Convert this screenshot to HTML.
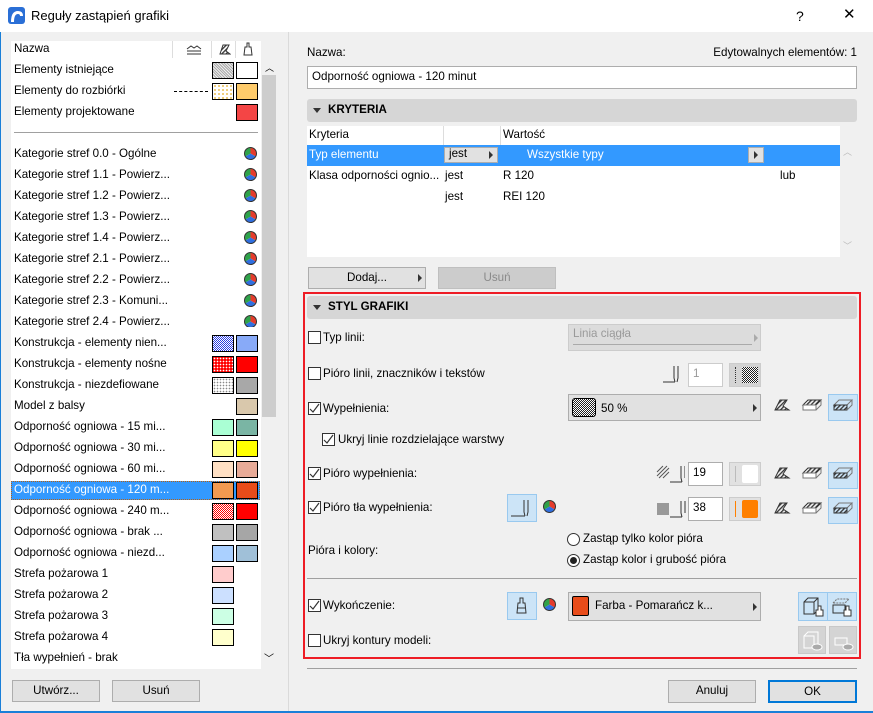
<!DOCTYPE html>
<html><head><meta charset="utf-8">
<style>
*{box-sizing:border-box;margin:0;padding:0}
body{width:873px;height:713px;background:#f0f0f0;font-family:"Liberation Sans",sans-serif;font-size:11.6px;color:#000;position:relative;overflow:hidden}
.a{position:absolute}
.t{position:absolute;line-height:16px;white-space:nowrap}
.sw{position:absolute;width:22px;height:17px;border:1px solid #000}
.btn{position:absolute;background:#e1e1e1;border:1px solid #adadad;text-align:center;line-height:20px}
.cb{position:absolute;width:13px;height:13px;border:1px solid #333;background:#fff}
.bar{position:absolute;background:#d6d6d6;border-radius:3px;font-weight:bold;line-height:22px}
.dd{position:absolute;background:#e1e1e1;border:1px solid #adadad}
.inp{position:absolute;background:#fff;border:1px solid #adadad;line-height:20px;padding-left:4px}
.bb{position:absolute;background:#cce4f7;border:1px solid #99c9ef}
.tri{position:absolute;width:0;height:0;border-top:4px solid transparent;border-bottom:4px solid transparent;border-left:4px solid #333}
</style></head><body>
<svg width="0" height="0" style="position:absolute"><defs>
<pattern id="h" width="3" height="3" patternUnits="userSpaceOnUse" patternTransform="rotate(45)"><rect width="1.3" height="3" fill="#333"/></pattern>
</defs></svg>

<!-- title bar -->
<div class="a" style="left:0;top:0;width:873px;height:32px;background:#fff"></div>
<svg class="a" style="left:8px;top:7px" width="17" height="17"><rect width="17" height="17" rx="3" fill="#2a6fd6"/><path d="M3 15 Q3 4 10 4 Q15 4 15 9 L12 9 Q12 7 10 7 Q6 7 6 15 Z" fill="#fff"/></svg>
<div class="t" style="left:31px;top:8px;font-size:13px">Reguły zastąpień grafiki</div>
<div class="t" style="left:796px;top:8px;font-size:14px">?</div>
<div class="t" style="left:843px;top:7px;font-size:15px">✕</div>
<div class="a" style="left:0;top:32px;width:1px;height:681px;background:#1a7fd8"></div>
<div class="a" style="left:0;top:711px;width:873px;height:2px;background:#1a7fd8"></div>

<!-- left list -->
<div class="a" style="left:11px;top:41px;width:250px;height:628px;background:#fff"></div>
<div class="a" style="left:261px;top:58px;width:16px;height:611px;background:#f0f0f0"></div>
<div class="a" style="left:262px;top:75px;width:14px;height:342px;background:#cdcdcd"></div>
<div class="t" style="left:265px;top:60px;font-size:9px">︿</div>
<div class="t" style="left:264px;top:652px;font-size:10px">﹀</div>
<div class="t" style="left:14px;top:41px">Nazwa</div>
<div class="a" style="left:172px;top:41px;width:1px;height:17px;background:#ddd"></div>
<div class="a" style="left:211px;top:41px;width:1px;height:17px;background:#ddd"></div>
<div class="a" style="left:235px;top:41px;width:1px;height:17px;background:#ddd"></div>
<svg class="a" style="left:186px;top:43px" width="16" height="12"><path d="M1 6 L5 3 L8 5 L11 3 L15 6 M1 8 H15 M1 11 H15" stroke="#333" fill="none"/></svg>
<svg class="a" style="left:219px;top:43px" width="12" height="12"><path d="M1 11 L4 2 L10 2 L7 8 L11 11 Z" stroke="#333" fill="url(#h)"/></svg>
<svg class="a" style="left:243px;top:42px" width="10" height="14"><path d="M4 1 H6 V5 H8 L9 13 H1 L2 5 H4 Z" stroke="#333" fill="none"/></svg>
<div class="a" style="left:14px;top:132px;width:244px;height:1px;background:#a0a0a0"></div>
<div class="a" style="left:11px;top:481px;width:249px;height:19px;background:#3399ff;border:1px dotted #b86010"></div>

<div class="t" style="left:14px;top:62px">Elementy istniejące</div>
<div class="t" style="left:14px;top:83px">Elementy do rozbiórki</div>
<div class="t" style="left:14px;top:104px">Elementy projektowane</div>
<div class="a" style="left:174px;top:91px;width:34px;border-top:1px dashed #000"></div>
<div class="sw" style="left:212px;top:62px;background:repeating-linear-gradient(45deg,#aaa 0 1px,#eee 1px 2px)"></div>
<div class="sw" style="left:236px;top:62px;background:#fff"></div>
<div class="sw" style="left:212px;top:83px;background:radial-gradient(#e0a000 0.6px,#fff 1px) 0 0/4px 4px"></div>
<div class="sw" style="left:236px;top:83px;background:#fecb6b"></div>
<div class="sw" style="left:236px;top:104px;background:#f44545"></div>

<div class="t" style="left:14px;top:146px">Kategorie stref 0.0 - Ogólne</div>
<div class="t" style="left:14px;top:167px">Kategorie stref 1.1 - Powierz...</div>
<div class="t" style="left:14px;top:188px">Kategorie stref 1.2 - Powierz...</div>
<div class="t" style="left:14px;top:209px">Kategorie stref 1.3 - Powierz...</div>
<div class="t" style="left:14px;top:230px">Kategorie stref 1.4 - Powierz...</div>
<div class="t" style="left:14px;top:251px">Kategorie stref 2.1 - Powierz...</div>
<div class="t" style="left:14px;top:272px">Kategorie stref 2.2 - Powierz...</div>
<div class="t" style="left:14px;top:293px">Kategorie stref 2.3 - Komuni...</div>
<div class="t" style="left:14px;top:314px">Kategorie stref 2.4 - Powierz...</div>
<svg class="a" style="left:244px;top:147px" width="13" height="180">
<g><path d="M6.5 6.5 L6.5 0.5 A6 6 0 0 1 11.7 9.5 Z" fill="#e53b2c"/><path d="M6.5 6.5 L11.7 9.5 A6 6 0 0 1 1.3 9.5 Z" fill="#2f6fe0"/><path d="M6.5 6.5 L1.3 9.5 A6 6 0 0 1 6.5 0.5 Z" fill="#2fa24a"/><circle cx="6.5" cy="6.5" r="6" fill="none" stroke="#333"/></g>
<g transform="translate(0,21)"><path d="M6.5 6.5 L6.5 0.5 A6 6 0 0 1 11.7 9.5 Z" fill="#e53b2c"/><path d="M6.5 6.5 L11.7 9.5 A6 6 0 0 1 1.3 9.5 Z" fill="#2f6fe0"/><path d="M6.5 6.5 L1.3 9.5 A6 6 0 0 1 6.5 0.5 Z" fill="#2fa24a"/><circle cx="6.5" cy="6.5" r="6" fill="none" stroke="#333"/></g>
<g transform="translate(0,42)"><path d="M6.5 6.5 L6.5 0.5 A6 6 0 0 1 11.7 9.5 Z" fill="#e53b2c"/><path d="M6.5 6.5 L11.7 9.5 A6 6 0 0 1 1.3 9.5 Z" fill="#2f6fe0"/><path d="M6.5 6.5 L1.3 9.5 A6 6 0 0 1 6.5 0.5 Z" fill="#2fa24a"/><circle cx="6.5" cy="6.5" r="6" fill="none" stroke="#333"/></g>
<g transform="translate(0,63)"><path d="M6.5 6.5 L6.5 0.5 A6 6 0 0 1 11.7 9.5 Z" fill="#e53b2c"/><path d="M6.5 6.5 L11.7 9.5 A6 6 0 0 1 1.3 9.5 Z" fill="#2f6fe0"/><path d="M6.5 6.5 L1.3 9.5 A6 6 0 0 1 6.5 0.5 Z" fill="#2fa24a"/><circle cx="6.5" cy="6.5" r="6" fill="none" stroke="#333"/></g>
<g transform="translate(0,84)"><path d="M6.5 6.5 L6.5 0.5 A6 6 0 0 1 11.7 9.5 Z" fill="#e53b2c"/><path d="M6.5 6.5 L11.7 9.5 A6 6 0 0 1 1.3 9.5 Z" fill="#2f6fe0"/><path d="M6.5 6.5 L1.3 9.5 A6 6 0 0 1 6.5 0.5 Z" fill="#2fa24a"/><circle cx="6.5" cy="6.5" r="6" fill="none" stroke="#333"/></g>
<g transform="translate(0,105)"><path d="M6.5 6.5 L6.5 0.5 A6 6 0 0 1 11.7 9.5 Z" fill="#e53b2c"/><path d="M6.5 6.5 L11.7 9.5 A6 6 0 0 1 1.3 9.5 Z" fill="#2f6fe0"/><path d="M6.5 6.5 L1.3 9.5 A6 6 0 0 1 6.5 0.5 Z" fill="#2fa24a"/><circle cx="6.5" cy="6.5" r="6" fill="none" stroke="#333"/></g>
<g transform="translate(0,126)"><path d="M6.5 6.5 L6.5 0.5 A6 6 0 0 1 11.7 9.5 Z" fill="#e53b2c"/><path d="M6.5 6.5 L11.7 9.5 A6 6 0 0 1 1.3 9.5 Z" fill="#2f6fe0"/><path d="M6.5 6.5 L1.3 9.5 A6 6 0 0 1 6.5 0.5 Z" fill="#2fa24a"/><circle cx="6.5" cy="6.5" r="6" fill="none" stroke="#333"/></g>
<g transform="translate(0,147)"><path d="M6.5 6.5 L6.5 0.5 A6 6 0 0 1 11.7 9.5 Z" fill="#e53b2c"/><path d="M6.5 6.5 L11.7 9.5 A6 6 0 0 1 1.3 9.5 Z" fill="#2f6fe0"/><path d="M6.5 6.5 L1.3 9.5 A6 6 0 0 1 6.5 0.5 Z" fill="#2fa24a"/><circle cx="6.5" cy="6.5" r="6" fill="none" stroke="#333"/></g>
<g transform="translate(0,168)"><path d="M6.5 6.5 L6.5 0.5 A6 6 0 0 1 11.7 9.5 Z" fill="#e53b2c"/><path d="M6.5 6.5 L11.7 9.5 A6 6 0 0 1 1.3 9.5 Z" fill="#2f6fe0"/><path d="M6.5 6.5 L1.3 9.5 A6 6 0 0 1 6.5 0.5 Z" fill="#2fa24a"/><circle cx="6.5" cy="6.5" r="6" fill="none" stroke="#333"/></g>
</svg>

<div class="t" style="left:14px;top:335px">Konstrukcja - elementy nien...</div>
<div class="t" style="left:14px;top:356px">Konstrukcja - elementy nośne</div>
<div class="t" style="left:14px;top:377px">Konstrukcja - niezdefiowane</div>
<div class="t" style="left:14px;top:398px">Model z balsy</div>
<div class="t" style="left:14px;top:419px">Odporność ogniowa -  15 mi...</div>
<div class="t" style="left:14px;top:440px">Odporność ogniowa -  30 mi...</div>
<div class="t" style="left:14px;top:461px">Odporność ogniowa -  60 mi...</div>
<div class="t" style="left:14px;top:482px;color:#fff">Odporność ogniowa - 120 m...</div>
<div class="t" style="left:14px;top:503px">Odporność ogniowa - 240 m...</div>
<div class="t" style="left:14px;top:524px">Odporność ogniowa - brak ...</div>
<div class="t" style="left:14px;top:545px">Odporność ogniowa - niezd...</div>
<div class="t" style="left:14px;top:566px">Strefa pożarowa 1</div>
<div class="t" style="left:14px;top:587px">Strefa pożarowa 2</div>
<div class="t" style="left:14px;top:608px">Strefa pożarowa 3</div>
<div class="t" style="left:14px;top:629px">Strefa pożarowa 4</div>
<div class="t" style="left:14px;top:650px">Tła wypełnień - brak</div>

<div class="sw" style="left:212px;top:335px;background:repeating-conic-gradient(#2a3ee0 0 25%,#fff 0 50%) 0 0/2px 2px"></div>
<div class="sw" style="left:236px;top:335px;background:#88aaf8"></div>
<div class="sw" style="left:212px;top:356px;background:radial-gradient(#fff 0.6px,#f00 1px) 0 0/3px 3px"></div>
<div class="sw" style="left:236px;top:356px;background:#f00"></div>
<div class="sw" style="left:212px;top:377px;background:radial-gradient(#888 0.6px,#fff 1px) 0 0/3px 3px"></div>
<div class="sw" style="left:236px;top:377px;background:#a8a8a8"></div>
<div class="sw" style="left:236px;top:398px;background:#d9c8ac"></div>
<div class="sw" style="left:212px;top:419px;background:#aaffd4"></div>
<div class="sw" style="left:236px;top:419px;background:#7ab5a4"></div>
<div class="sw" style="left:212px;top:440px;background:#ffff88"></div>
<div class="sw" style="left:236px;top:440px;background:#ffff00"></div>
<div class="sw" style="left:212px;top:461px;background:#ffe0c4"></div>
<div class="sw" style="left:236px;top:461px;background:#e8ab98"></div>
<div class="sw" style="left:212px;top:482px;background:#f29a50"></div>
<div class="sw" style="left:236px;top:482px;background:#e84c1a"></div>
<div class="sw" style="left:212px;top:503px;background:repeating-conic-gradient(#f00 0 25%,#fff 0 50%) 0 0/2px 2px"></div>
<div class="sw" style="left:236px;top:503px;background:#f00"></div>
<div class="sw" style="left:212px;top:524px;background:#c0c0c0"></div>
<div class="sw" style="left:236px;top:524px;background:#a6a6a6"></div>
<div class="sw" style="left:212px;top:545px;background:#aad0ff"></div>
<div class="sw" style="left:236px;top:545px;background:#a0c0d8"></div>
<div class="sw" style="left:212px;top:566px;background:#ffcccc"></div>
<div class="sw" style="left:212px;top:587px;background:#cce0ff"></div>
<div class="sw" style="left:212px;top:608px;background:#ccffe4"></div>
<div class="sw" style="left:212px;top:629px;background:#ffffcc"></div>

<div class="btn" style="left:12px;top:680px;width:88px;height:22px">Utwórz...</div>
<div class="btn" style="left:112px;top:680px;width:88px;height:22px">Usuń</div>

<div class="a" style="left:288px;top:32px;width:1px;height:679px;background:#dadada"></div>

<!-- right -->
<div class="t" style="left:307px;top:45px">Nazwa:</div>
<div class="t" style="right:16px;top:45px">Edytowalnych elementów: 1</div>
<div class="inp" style="left:307px;top:66px;width:550px;height:23px">Odporność ogniowa - 120 minut</div>

<div class="bar" style="left:307px;top:99px;width:550px;height:23px;padding-left:21px">KRYTERIA</div>
<div class="a" style="left:313px;top:108px;border-left:4px solid transparent;border-right:4px solid transparent;border-top:5px solid #333"></div>

<div class="a" style="left:307px;top:126px;width:533px;height:131px;background:#fff"></div>
<div class="a" style="left:443px;top:126px;width:1px;height:19px;background:#ddd"></div>
<div class="a" style="left:500px;top:126px;width:1px;height:19px;background:#ddd"></div>
<div class="t" style="left:309px;top:127px">Kryteria</div>
<div class="t" style="left:503px;top:127px">Wartość</div>
<div class="a" style="left:307px;top:145px;width:533px;height:21px;background:#3399ff"></div>
<div class="t" style="left:309px;top:147px;color:#fff">Typ elementu</div>
<div class="a" style="left:444px;top:147px;width:54px;height:16px;background:#e1e1e1;border:1px solid #adadad"></div>
<div class="t" style="left:449px;top:146px">jest</div>
<div class="tri" style="left:489px;top:151px"></div>
<div class="t" style="left:527px;top:147px;color:#fff">Wszystkie typy</div>
<div class="a" style="left:748px;top:147px;width:16px;height:16px;background:#e1e1e1;border:1px solid #adadad"></div>
<div class="tri" style="left:754px;top:151px"></div>
<div class="t" style="left:309px;top:168px">Klasa odporności ognio...</div>
<div class="t" style="left:445px;top:168px">jest</div>
<div class="t" style="left:503px;top:168px">R 120</div>
<div class="t" style="left:780px;top:168px">lub</div>
<div class="t" style="left:445px;top:189px">jest</div>
<div class="t" style="left:503px;top:189px">REI 120</div>
<div class="t" style="left:843px;top:144px;color:#bbb;font-size:9px">︿</div>
<div class="t" style="left:843px;top:238px;color:#bbb;font-size:9px">﹀</div>

<div class="btn" style="left:308px;top:267px;width:118px;height:22px">Dodaj...</div>
<div class="tri" style="left:418px;top:274px"></div>
<div class="btn" style="left:438px;top:267px;width:118px;height:22px;background:#cccccc;border-color:#bfbfbf;color:#8a8a8a">Usuń</div>

<!-- red box -->
<div class="a" style="left:303px;top:292px;width:558px;height:367px;border:2px solid #ee1c25"></div>
<div class="bar" style="left:307px;top:296px;width:550px;height:23px;padding-left:21px">STYL GRAFIKI</div>
<div class="a" style="left:313px;top:305px;border-left:4px solid transparent;border-right:4px solid transparent;border-top:5px solid #333"></div>

<div class="cb" style="left:308px;top:331px"></div>
<div class="t" style="left:323px;top:330px">Typ linii:</div>
<div class="dd" style="left:568px;top:324px;width:193px;height:27px;background:#dcdcdc;border-color:#ccc"></div>
<div class="t" style="left:573px;top:326px;color:#999">Linia ciągła</div>
<div class="a" style="left:573px;top:344px;width:179px;height:1px;background:#aaa"></div>
<div class="tri" style="left:754px;top:334px;border-left-color:#aaa"></div>

<div class="cb" style="left:308px;top:367px"></div>
<div class="t" style="left:323px;top:366px">Pióro linii, znaczników i tekstów</div>
<svg class="a" style="left:662px;top:364px" width="22" height="20"><path d="M1 18 H13 M13 18 L12 14 V2 M16 2 V14 L15 18" stroke="#333" fill="none"/></svg>
<div class="inp" style="left:688px;top:363px;width:35px;height:24px;color:#999;border-color:#ccc">1</div>
<div class="a" style="left:729px;top:363px;width:32px;height:24px;background:#d4d4d4;border:1px solid #ccc"></div>
<div class="a" style="left:742px;top:367px;width:16px;height:16px;background:repeating-conic-gradient(#222 0 25%,#fff 0 50%) 0 0/2px 2px"></div>
<div class="a" style="left:735px;top:367px;width:1px;height:16px;border-left:1px dotted #333"></div>

<div class="cb" style="left:308px;top:402px"><svg width="11" height="11" style="position:absolute;left:0;top:0"><path d="M1 6 L4 9 L10 1" stroke="#333" fill="none" stroke-width="1.2"/></svg></div>
<div class="t" style="left:323px;top:401px">Wypełnienia:</div>
<div class="dd" style="left:568px;top:394px;width:193px;height:27px"></div>
<div class="a" style="left:572px;top:398px;width:24px;height:19px;border:1px solid #000;border-radius:3px;background:repeating-conic-gradient(#222 0 25%,#fff 0 50%) 0 0/2px 2px"></div>
<div class="t" style="left:601px;top:401px">50 %</div>
<div class="tri" style="left:753px;top:404px"></div>

<div class="cb" style="left:322px;top:433px"><svg width="11" height="11" style="position:absolute;left:0;top:0"><path d="M1 6 L4 9 L10 1" stroke="#333" fill="none" stroke-width="1.2"/></svg></div>
<div class="t" style="left:338px;top:432px">Ukryj linie rozdzielające warstwy</div>

<div class="cb" style="left:308px;top:467px"><svg width="11" height="11" style="position:absolute;left:0;top:0"><path d="M1 6 L4 9 L10 1" stroke="#333" fill="none" stroke-width="1.2"/></svg></div>
<div class="t" style="left:323px;top:466px">Pióro wypełnienia:</div>
<svg class="a" style="left:655px;top:462px" width="30" height="22"><path d="M2 10 L8 4 M2 14 L12 4 M4 16 L14 6 M8 16 L14 10" stroke="#555"/><path d="M15 20 H27 M27 20 L26 16 V4 M30 4 V16" stroke="#333" fill="none"/></svg>
<div class="inp" style="left:688px;top:462px;width:35px;height:24px">19</div>
<div class="a" style="left:729px;top:462px;width:32px;height:24px;background:#e1e1e1;border:1px solid #ccc"></div>
<div class="a" style="left:742px;top:465px;width:16px;height:18px;background:#fff;border-radius:2px"></div>
<div class="a" style="left:735px;top:466px;width:1px;height:16px;background:#bbb"></div>

<div class="cb" style="left:308px;top:501px"><svg width="11" height="11" style="position:absolute;left:0;top:0"><path d="M1 6 L4 9 L10 1" stroke="#333" fill="none" stroke-width="1.2"/></svg></div>
<div class="t" style="left:323px;top:500px">Pióro tła wypełnienia:</div>
<div class="bb" style="left:507px;top:494px;width:30px;height:28px"></div>
<svg class="a" style="left:510px;top:498px" width="24" height="20"><path d="M1 18 H15 M15 18 L14 14 V2 M18 2 V14 L17 18" stroke="#333" fill="none"/></svg>
<svg class="a" style="left:543px;top:500px" width="13" height="13"><path d="M6.5 6.5 L6.5 0.5 A6 6 0 0 1 11.7 9.5 Z" fill="#e53b2c"/><path d="M6.5 6.5 L11.7 9.5 A6 6 0 0 1 1.3 9.5 Z" fill="#2f6fe0"/><path d="M6.5 6.5 L1.3 9.5 A6 6 0 0 1 6.5 0.5 Z" fill="#2fa24a"/><circle cx="6.5" cy="6.5" r="6" fill="none" stroke="#333"/></svg>
<div class="a" style="left:657px;top:503px;width:12px;height:12px;background:#999"></div>
<svg class="a" style="left:670px;top:497px" width="16" height="22"><path d="M0 20 H12 M12 20 L11 16 V4 M15 4 V16" stroke="#333" fill="none"/></svg>
<div class="inp" style="left:688px;top:497px;width:35px;height:24px">38</div>
<div class="a" style="left:729px;top:497px;width:32px;height:24px;background:#e1e1e1;border:1px solid #ccc"></div>
<div class="a" style="left:742px;top:500px;width:16px;height:18px;background:#ff8000;border-radius:2px"></div>
<div class="a" style="left:735px;top:501px;width:1px;height:16px;background:#ff8000"></div>

<svg class="a" style="left:770px;top:394px" width="88" height="130">
<g>
<path d="M5 16 L10 6 L17 6 L13 12 L19 16 Z" fill="url(#h)" stroke="#333"/>
<path d="M33 11 L38 6 L51 6 L46 11 Z" fill="url(#h)" stroke="#333"/><path d="M33 11 H46 V16 H33 Z" fill="#fff" stroke="#777"/><path d="M46 16 L51 11 V6" fill="none" stroke="#777"/>
<rect x="58.5" y="0.5" width="29" height="26" fill="#cce4f7" stroke="#99c9ef"/>
<path d="M64 11 L69 6 L82 6 L77 11 Z" fill="none" stroke="#777"/><path d="M64 11 H77 V16 H64 Z" fill="url(#h)" stroke="#333"/><path d="M77 16 L82 11 V6" fill="none" stroke="#777"/>
</g>
<g transform="translate(0,68)">
<path d="M5 16 L10 6 L17 6 L13 12 L19 16 Z" fill="url(#h)" stroke="#333"/>
<path d="M33 11 L38 6 L51 6 L46 11 Z" fill="url(#h)" stroke="#333"/><path d="M33 11 H46 V16 H33 Z" fill="#fff" stroke="#777"/><path d="M46 16 L51 11 V6" fill="none" stroke="#777"/>
<rect x="58.5" y="0.5" width="29" height="26" fill="#cce4f7" stroke="#99c9ef"/>
<path d="M64 11 L69 6 L82 6 L77 11 Z" fill="none" stroke="#777"/><path d="M64 11 H77 V16 H64 Z" fill="url(#h)" stroke="#333"/><path d="M77 16 L82 11 V6" fill="none" stroke="#777"/>
</g>
<g transform="translate(0,103)">
<path d="M5 16 L10 6 L17 6 L13 12 L19 16 Z" fill="url(#h)" stroke="#333"/>
<path d="M33 11 L38 6 L51 6 L46 11 Z" fill="url(#h)" stroke="#333"/><path d="M33 11 H46 V16 H33 Z" fill="#fff" stroke="#777"/><path d="M46 16 L51 11 V6" fill="none" stroke="#777"/>
<rect x="58.5" y="0.5" width="29" height="26" fill="#cce4f7" stroke="#99c9ef"/>
<path d="M64 11 L69 6 L82 6 L77 11 Z" fill="none" stroke="#777"/><path d="M64 11 H77 V16 H64 Z" fill="url(#h)" stroke="#333"/><path d="M77 16 L82 11 V6" fill="none" stroke="#777"/>
</g>
</svg>

<div class="t" style="left:308px;top:543px">Pióra i kolory:</div>
<div class="a" style="left:567px;top:533px;width:13px;height:13px;border:1px solid #333;border-radius:50%;background:#fff"></div>
<div class="t" style="left:583px;top:531px">Zastąp tylko kolor pióra</div>
<div class="a" style="left:567px;top:554px;width:13px;height:13px;border:1px solid #333;border-radius:50%;background:#fff"></div>
<div class="a" style="left:570px;top:557px;width:7px;height:7px;border-radius:50%;background:#222"></div>
<div class="t" style="left:583px;top:552px">Zastąp kolor i grubość pióra</div>

<div class="a" style="left:307px;top:578px;width:550px;height:1px;background:#a0a0a0"></div>

<div class="cb" style="left:308px;top:599px"><svg width="11" height="11" style="position:absolute;left:0;top:0"><path d="M1 6 L4 9 L10 1" stroke="#333" fill="none" stroke-width="1.2"/></svg></div>
<div class="t" style="left:323px;top:598px">Wykończenie:</div>
<div class="bb" style="left:507px;top:592px;width:30px;height:28px"></div>
<svg class="a" style="left:515px;top:596px" width="14" height="20"><path d="M5 2 H8 V7 H10 L11 17 H2 L3 7 H5 Z" stroke="#333" fill="none"/><path d="M3 12 H10" stroke="#333"/></svg>
<svg class="a" style="left:543px;top:598px" width="13" height="13"><path d="M6.5 6.5 L6.5 0.5 A6 6 0 0 1 11.7 9.5 Z" fill="#e53b2c"/><path d="M6.5 6.5 L11.7 9.5 A6 6 0 0 1 1.3 9.5 Z" fill="#2f6fe0"/><path d="M6.5 6.5 L1.3 9.5 A6 6 0 0 1 6.5 0.5 Z" fill="#2fa24a"/><circle cx="6.5" cy="6.5" r="6" fill="none" stroke="#333"/></svg>
<div class="dd" style="left:568px;top:592px;width:193px;height:29px"></div>
<div class="a" style="left:572px;top:596px;width:17px;height:20px;background:#e84c1a;border:1px solid #000;border-radius:2px"></div>
<div class="t" style="left:595px;top:598px">Farba - Pomarańcz k...</div>
<div class="tri" style="left:753px;top:603px"></div>
<div class="bb" style="left:798px;top:592px;width:30px;height:29px"></div>
<div class="bb" style="left:827px;top:592px;width:30px;height:29px"></div>
<svg class="a" style="left:801px;top:595px" width="54" height="24"><path d="M3 7 L7 3 H17 V15 L13 19 H3 Z M3 7 H13 V19 M13 7 L17 3" stroke="#333" fill="none"/><path d="M17 11 H20 V15 L22 15 V21 H15 V15 H17Z" fill="#fff" stroke="#333"/>
<path d="M32 8 L36 4 H48 L44 8 Z" fill="none" stroke="#777" stroke-dasharray="2 1"/><path d="M32 10 H44 V18 H32 Z" fill="none" stroke="#333"/><path d="M45 11 H48 V15 L50 15 V21 H43 V15 H45Z" fill="#fff" stroke="#333"/></svg>

<div class="cb" style="left:308px;top:634px"></div>
<div class="t" style="left:323px;top:633px">Ukryj kontury modeli:</div>
<div class="a" style="left:798px;top:626px;width:28px;height:28px;background:#d4d4d4;border:1px solid #c8c8c8"></div>
<div class="a" style="left:829px;top:626px;width:28px;height:28px;background:#d4d4d4;border:1px solid #c8c8c8"></div>
<svg class="a" style="left:801px;top:629px" width="54" height="24"><path d="M3 7 L7 3 H17 V15 L13 19 H3 Z M3 7 H13 V19" stroke="#fff" fill="none"/><ellipse cx="16" cy="18" rx="5" ry="3" fill="#aaa" stroke="#fff"/><path d="M34 9 H46 V16 H34 Z" stroke="#fff" fill="none"/><ellipse cx="47" cy="18" rx="5" ry="3" fill="#aaa" stroke="#fff"/></svg>

<div class="a" style="left:307px;top:668px;width:550px;height:1px;background:#a0a0a0"></div>
<div class="btn" style="left:668px;top:680px;width:88px;height:23px">Anuluj</div>
<div class="btn" style="left:768px;top:680px;width:89px;height:23px;border:2px solid #0078d7;line-height:19px">OK</div>
</body></html>
